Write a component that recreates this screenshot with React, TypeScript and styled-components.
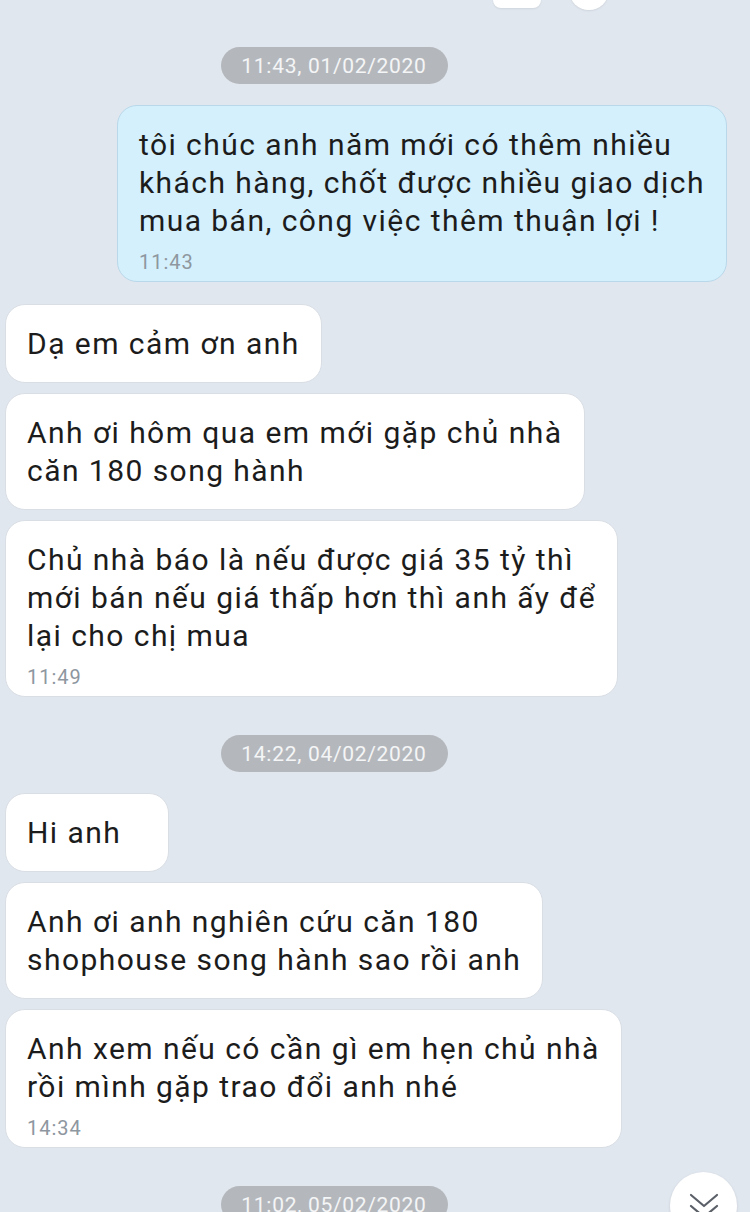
import React from "react";
import styled, { createGlobalStyle } from "styled-components";

const Global = createGlobalStyle`
  html, body { margin: 0; padding: 0; background: #e1e7ef; overflow: hidden; }
  body { font-family: Roboto, "Noto Sans", sans-serif; }
`;

const Screen = styled.div`
  position: relative;
  width: 750px;
  height: 1212px;
  overflow: hidden;
  background: #e1e7ef;
`;

const Feed = styled.div`
  display: flex;
  flex-direction: column;
  padding: 0 23px 0 5px;
`;

const TopStub = styled.div`
  display: flex;
  align-items: flex-start;
  gap: 28px;
  height: 47px;
  padding-left: 488px;
`;

const StubRect = styled.div`
  width: 48px;
  height: 30px;
  margin-top: -22px;
  background: #fff;
  border-radius: 8px;
  box-shadow: 0 1px 2px rgba(0, 0, 0, 0.08);
`;

const StubCircle = styled.div`
  width: 40px;
  height: 40px;
  margin-top: -30px;
  background: #fff;
  border-radius: 50%;
  box-shadow: 0 1px 2px rgba(0, 0, 0, 0.08);
`;

const DateRow = styled.div<{ $before?: number }>`
  display: flex;
  justify-content: center;
  margin-top: ${(p) => p.$before ?? 0}px;
  margin-bottom: 21px;
  transform: translateX(-32px);
`;

const DatePill = styled.div`
  height: 37px;
  width: 227px;
  border-radius: 19px;
  background: #b4b8bd;
  color: #f4f5f6;
  font-size: 21px;
  letter-spacing: 0.7px;
  display: flex;
  align-items: center;
  justify-content: center;
`;

const Group = styled.div<{ $mine?: boolean }>`
  display: flex;
  flex-direction: column;
  align-items: ${(p) => (p.$mine ? "flex-end" : "flex-start")};
  gap: 10px;
  margin-bottom: 22px;
`;

const Bubble = styled.div<{ $mine?: boolean; $timed?: boolean }>`
  box-sizing: border-box;
  min-width: 164px;
  padding: 20px 21px ${(p) => (p.$timed ? "7px" : "19px")};
  border-radius: 20px;
  background: ${(p) => (p.$mine ? "#d4f0fc" : "#ffffff")};
  border: 1px solid ${(p) => (p.$mine ? "#b9d8ea" : "#d9dee5")};
  color: #1c1c1c;
  font-size: 30px;
  letter-spacing: 1.45px;
  line-height: 38px;
  white-space: nowrap;
`;

const Line = styled.div``;

const Time = styled.div`
  margin-top: 10px;
  font-size: 20px;
  letter-spacing: 1px;
  line-height: 24px;
  color: #8e979f;
`;

const ScrollButton = styled.div`
  position: absolute;
  left: 670px;
  top: 1172px;
  width: 67px;
  height: 67px;
  border-radius: 50%;
  background: #fff;
  box-shadow: 0 1px 3px rgba(0, 0, 0, 0.12);
  display: flex;
  justify-content: center;
  padding-top: 20px;
  box-sizing: border-box;
`;

type Msg = { lines: string[]; time?: string };

const Message = ({ m, mine }: { m: Msg; mine?: boolean }) => (
  <Bubble $mine={mine} $timed={!!m.time}>
    {m.lines.map((l, i) => (
      <Line key={i}>{l}</Line>
    ))}
    {m.time && <Time>{m.time}</Time>}
  </Bubble>
);

export default function App() {
  return (
    <Screen>
      <Global />
      <Feed>
        <TopStub>
          <StubRect />
          <StubCircle />
        </TopStub>
        <DateRow>
          <DatePill>11:43, 01/02/2020</DatePill>
        </DateRow>
        <Group $mine>
          <Message
            mine
            m={{
              lines: [
                "tôi chúc anh năm mới có thêm nhiều",
                "khách hàng, chốt được nhiều giao dịch",
                "mua bán, công việc thêm thuận lợi !",
              ],
              time: "11:43",
            }}
          />
        </Group>
        <Group>
          <Message m={{ lines: ["Dạ em cảm ơn anh"] }} />
          <Message m={{ lines: ["Anh ơi hôm qua em mới gặp chủ nhà", "căn 180 song hành"] }} />
          <Message
            m={{
              lines: [
                "Chủ nhà báo là nếu được giá 35 tỷ thì",
                "mới bán nếu giá thấp hơn thì anh ấy để",
                "lại cho chị mua",
              ],
              time: "11:49",
            }}
          />
        </Group>
        <DateRow $before={16}>
          <DatePill>14:22, 04/02/2020</DatePill>
        </DateRow>
        <Group>
          <Message m={{ lines: ["Hi anh"] }} />
          <Message m={{ lines: ["Anh ơi anh nghiên cứu căn 180", "shophouse song hành sao rồi anh"] }} />
          <Message
            m={{
              lines: ["Anh xem nếu có cần gì em hẹn chủ nhà", "rồi mình gặp trao đổi anh nhé"],
              time: "14:34",
            }}
          />
        </Group>
        <DateRow $before={16}>
          <DatePill>11:02, 05/02/2020</DatePill>
        </DateRow>
      </Feed>
      <ScrollButton>
        <svg width="32" height="30" viewBox="0 0 32 30" fill="none" stroke="#5b6068" strokeWidth="2.2" strokeLinecap="round" strokeLinejoin="round">
          <polyline points="3,3 16,14 29,3" />
          <polyline points="3,14 16,25 29,14" />
        </svg>
      </ScrollButton>
    </Screen>
  );
}
